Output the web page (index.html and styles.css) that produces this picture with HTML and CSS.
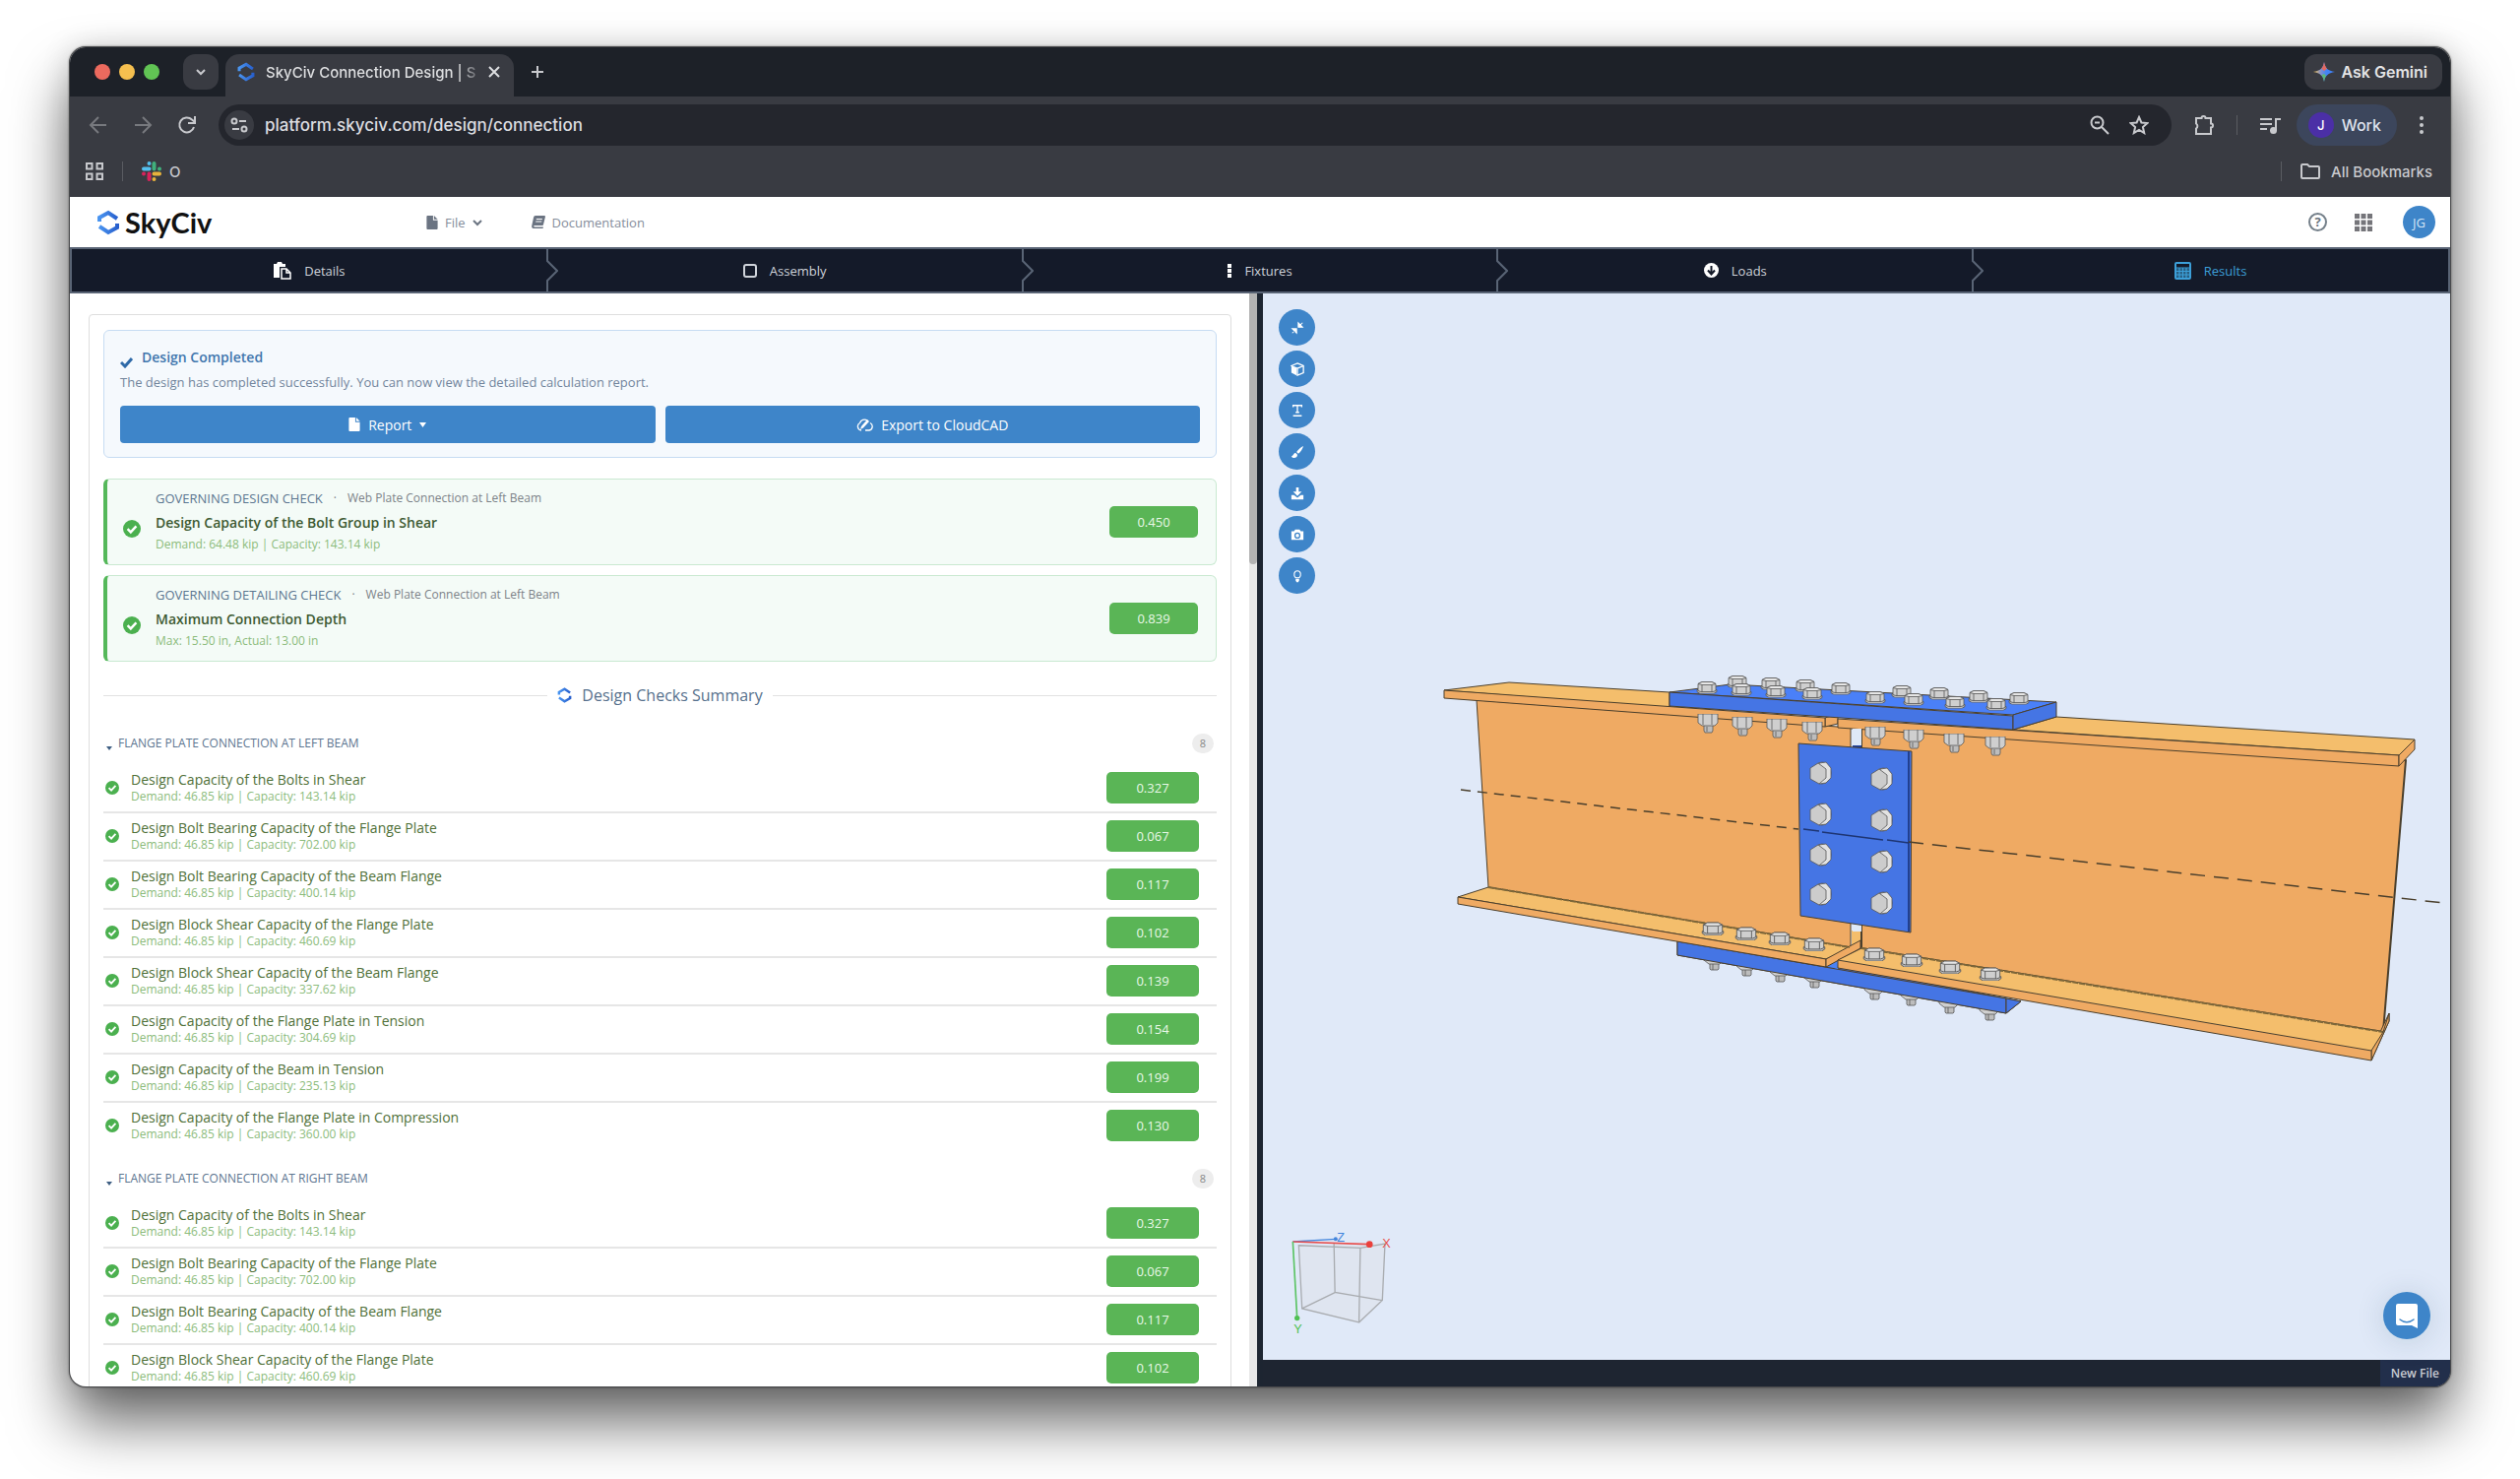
FILE: index.html
```html
<!DOCTYPE html>
<html lang="en">

<head>
  <meta charset="UTF-8">
  <title>SkyCiv Connection Design | SkyCiv</title>
  <link rel="stylesheet" href="styles.css">
</head>

<body>
  <!-- Shared icons -->
  <svg class="defs" width="0" height="0" aria-hidden="true">
    <defs>
      <linearGradient id="blueFade" gradientUnits="userSpaceOnUse" x1="0" y1="0" x2="24" y2="0">
        <stop offset="0" stop-color="#4f9cf5" />
        <stop offset="1" stop-color="#2358c8" />
      </linearGradient>
      <linearGradient id="gemini" x1="0" y1="0" x2="1" y2="0">
        <stop offset="0" stop-color="#f6c244" />
        <stop offset="0.35" stop-color="#7f8fd0" />
        <stop offset="0.6" stop-color="#4285f4" />
        <stop offset="1" stop-color="#3f7df0" />
      </linearGradient>
    </defs>
    <symbol id="skyciv" viewBox="0 0 24 26">
      <g fill="none" stroke="url(#blueFade)" stroke-width="4">
        <path d="M3 12V8l9-5 9 6" />
        <path d="M21 14v4l-9 5-9-6" />
      </g>
    </symbol>
    <symbol id="ok" viewBox="0 0 18 18">
      <circle cx="9" cy="9" r="9" fill="#4bb04f" />
      <path d="M4.6 9.2l3.2 3.2 5.6-6" fill="none" stroke="#fff" stroke-width="2.4" />
    </symbol>
    <symbol id="file" viewBox="0 0 12 15">
      <path d="M1 0h6v5h5v9a1 1 0 0 1-1 1H1a1 1 0 0 1-1-1V1a1 1 0 0 1 1-1z" fill="currentColor" />
      <path d="M8 0l4 4H8z" fill="currentColor" />
    </symbol>
    <symbol id="head" viewBox="0 0 22 13">
      <path d="M1 9h20v2l-3 2H4l-3-2z" fill="#b9b9b9" />
      <path d="M2 3l4-2h10l4 2v7l-3 1H5l-3-1z" fill="#cfcfcf" />
      <path d="M2 3l4-2h10l4 2-4 1H6z" fill="#e6e6e6" />
      <path d="M6 4v7M16 4v7" />
    </symbol>
    <symbol id="nut" viewBox="0 0 22 20">
      <path d="M7 11h9v6l-1 2H8l-1-2z" fill="#bdbdbd" />
      <path d="M1 0h20v9l-3 3H5L1 9z" fill="#cfcfcf" />
      <path d="M6 0v11M15 0v11M10 13v5" />
    </symbol>
    <symbol id="tip" viewBox="0 0 22 14">
      <path d="M7 4h9v8l-1 1H8l-1-1z" fill="#bdbdbd" />
      <path d="M1 0h20v3l-4 4H6L1 3z" fill="#cfcfcf" />
      <path d="M10 7v6" />
    </symbol>
    <symbol id="hex" viewBox="0 0 24 24">
      <ellipse cx="14" cy="12" rx="9" ry="11" fill="#b5b5b5" />
      <path d="M11 2l7-1 5 6v10l-5 5-7 1z" fill="#e2e2e2" />
      <path d="M2 7l8-5 8 6v9l-7 6-9-5z" fill="#cccccc" />
    </symbol>
  </svg>

  <div class="window">
    <!-- Browser tab strip -->
    <div class="tabstrip">
      <div class="lights"><i class="red"></i><i class="yellow"></i><i class="green"></i></div>
      <button class="tab-search" aria-label="Search tabs">
        <svg width="12" height="12" viewBox="0 0 12 12"><path d="M2 4l4 4 4-4" /></svg>
      </button>
      <div class="tab">
        <svg width="20" height="20"><use href="#skyciv" /></svg>
        <span class="tab-title">SkyCiv Connection Design | S</span>
        <button class="plain" aria-label="Close tab">
          <svg width="12" height="12" viewBox="0 0 12 12"><path d="M1 1l10 10M11 1L1 11" /></svg>
        </button>
      </div>
      <button class="plain new-tab" aria-label="New tab">
        <svg width="14" height="14" viewBox="0 0 14 14"><path d="M7 1v12M1 7h12" /></svg>
      </button>
      <button class="gemini">
        <svg width="24" height="20" viewBox="0 0 24 20"><path d="M12 0c1 6 4 9 11 10-7 1-10 4-11 10C11 14 8 11 1 10 8 9 11 6 12 0z" fill="url(#gemini)" stroke="none" /><path d="M12 0c.5 3 1.500 5 3 6.800L12 9 9.300 6.600C11 5 11.500 3 12 0z" fill="#e4685f" stroke="none" /><path d="M12 20c-.5-3-1.200-5-2.700-6.700L12 12l2 2c-1 1.500-1.600 3-2 6z" fill="#5cb874" stroke="none" /></svg>
        Ask Gemini
      </button>
    </div>

    <!-- Address bar -->
    <div class="toolbar">
      <div class="history">
        <button class="plain dim" aria-label="Back"><svg width="20" height="20" viewBox="0 0 20 20"><path d="M18 10H3M10 2l-8 8 8 8" /></svg></button>
        <button class="plain dim" aria-label="Forward"><svg width="20" height="20" viewBox="0 0 20 20"><path d="M2 10h15M10 2l8 8-8 8" /></svg></button>
        <button class="plain" aria-label="Reload"><svg width="20" height="20" viewBox="0 0 20 20"><path d="M17 12a7.500 7.500 0 1 1-2-7.500L18 7M18 1v7h-7" /></svg></button>
      </div>
      <div class="address">
        <button class="site-info" aria-label="Site information"><svg width="18" height="18" viewBox="0 0 18 18"><circle cx="4" cy="5" r="2.500" /><path d="M9 5h7M2 13h7" /><circle cx="14" cy="13" r="2.500" /></svg></button>
        <input class="url" type="text" aria-label="Address" value="platform.skyciv.com/design/connection">
        <button class="plain" aria-label="Zoom"><svg width="20" height="20" viewBox="0 0 20 20"><circle cx="7.500" cy="7.500" r="6" /><path d="M12 12l7 7M5 7.500h5" /></svg></button>
        <button class="plain" aria-label="Bookmark"><svg width="20" height="20" viewBox="0 0 20 20"><path d="M10 2l2.400 5.500 6 .5-4.500 4 1.300 6-5.200-3.200L4.800 18l1.300-6L1.600 8l6-.5z" /></svg></button>
      </div>
      <button class="plain" aria-label="Extensions"><svg width="22" height="22" viewBox="0 0 22 22"><path d="M3 4h5.500a2 2 0 0 1 4 0H18v5.500a2 2 0 0 1 0 4V20H3v-5.500a3 3 0 0 0 0-5z" /></svg></button>
      <span class="sep"></span>
      <button class="plain" aria-label="Media"><svg width="22" height="20" viewBox="0 0 22 20"><path d="M1 4h12M1 9h12M1 14h7M17 16V4h5" /><circle cx="14.500" cy="15.500" r="2.500" fill="currentColor" /></svg></button>
      <button class="profile"><span class="face">J</span>Work</button>
      <button class="plain" aria-label="Menu"><svg width="6" height="20" viewBox="0 0 6 20" fill="currentColor" stroke="none"><circle cx="3" cy="3" r="2" /><circle cx="3" cy="10" r="2" /><circle cx="3" cy="17" r="2" /></svg></button>
    </div>

    <!-- Bookmarks -->
    <div class="bookmarks">
      <button class="plain" aria-label="Tab groups"><svg width="20" height="20" viewBox="0 0 20 20"><rect x="2" y="2" width="5.500" height="5.500" /><rect x="12.500" y="2" width="5.500" height="5.500" /><rect x="2" y="12.500" width="5.500" height="5.500" /><rect x="12.500" y="12.500" width="5.500" height="5.500" /></svg></button>
      <span class="sep"></span>
      <a href="#" class="bookmark">
        <svg width="22" height="22" viewBox="0 0 22 22" stroke-linecap="round" stroke-width="4">
          <path d="M8.500 3v0M3 8.500h5.500" stroke="#54c0ee" />
          <path d="M13.500 3v5.500M19 8.500v0" stroke="#40b07c" />
          <path d="M13.500 13.500H19M13.500 19v0" stroke="#e7b23c" />
          <path d="M8.500 13.500V19M3 13.500v0" stroke="#d8235b" />
        </svg>
        O
      </a>
      <span class="sep push"></span>
      <a href="#" class="bookmark all">
        <svg width="22" height="18" viewBox="0 0 22 18"><path d="M2 3a1 1 0 0 1 1-1h5l2 2h9a1 1 0 0 1 1 1v10a1 1 0 0 1-1 1H3a1 1 0 0 1-1-1z" /></svg>
        All Bookmarks
      </a>
    </div>

    <!-- App header -->
    <header class="app-header">
      <a href="#" class="logo"><svg width="24" height="26"><use href="#skyciv" /></svg>SkyCiv</a>
      <nav class="app-menu">
        <a href="#"><svg width="12" height="14"><use href="#file" /></svg>File<svg width="10" height="8" viewBox="0 0 10 8"><path d="M1 2l4 4 4-4" fill="none" stroke="currentColor" stroke-width="2" /></svg></a>
        <a href="#"><svg width="14" height="13" viewBox="0 0 14 13"><path d="M4 0h9a1 1 0 0 1 1 1l-2 8a1 1 0 0 1-1 1H3c-1 0-1 1.500 0 1.500h9l-.5 1.500H2c-1.500 0-2-1-1.800-2.500L2 2c.3-1.200.8-2 2-2zm1 3-.3 1h6l.3-1zm-.6 2.500-.3 1h6l.3-1z" fill="currentColor" /></svg>Documentation</a>
      </nav>
      <button class="help" aria-label="Help">?</button>
      <button class="apps" aria-label="Apps"><svg width="18" height="18" viewBox="0 0 18 18" fill="#75757a"><path d="M0 0h5v5H0zM6.500 0h5v5h-5zM13 0h5v5h-5zM0 6.500h5v5H0zM6.500 6.500h5v5h-5zM13 6.500h5v5h-5zM0 13h5v5H0zM6.500 13h5v5h-5zM13 13h5v5h-5z" /></svg></button>
      <button class="avatar">JG</button>
    </header>

    <!-- Design steps -->
    <ol class="steps">
      <li><a href="#"><svg width="18" height="18" viewBox="0 0 18 18"><path d="M0 2h3l1-2h4l1 2h3v3H6v11H0z" fill="#fff" /><path d="M8 7h5l4 4v6H8zM13 7v4h4" fill="none" stroke="#fff" stroke-width="1.500" /></svg>Details</a><svg class="notch" width="12" height="44" viewBox="0 0 12 44"><path d="M1 0v12l10 10L1 32v12" /></svg></li>
      <li><a href="#"><svg width="14" height="14" viewBox="0 0 14 14"><rect x="1" y="1" width="12" height="12" rx="2" fill="none" stroke="#cfd3da" stroke-width="2" /></svg>Assembly</a><svg class="notch" width="12" height="44" viewBox="0 0 12 44"><path d="M1 0v12l10 10L1 32v12" /></svg></li>
      <li><a href="#"><svg width="4" height="14" viewBox="0 0 4 14" fill="#fff"><path d="M0 0h4v4H0zM0 5h4v4H0zM0 10h4v4H0z" /></svg>Fixtures</a><svg class="notch" width="12" height="44" viewBox="0 0 12 44"><path d="M1 0v12l10 10L1 32v12" /></svg></li>
      <li><a href="#"><svg width="15" height="15" viewBox="0 0 15 15"><circle cx="7.500" cy="7.500" r="7.500" fill="#fff" /><path d="M7.500 3v8M4 7.500l3.500 4 3.500-4" fill="none" stroke="#141a29" stroke-width="2" /></svg>Loads</a><svg class="notch" width="12" height="44" viewBox="0 0 12 44"><path d="M1 0v12l10 10L1 32v12" /></svg></li>
      <li class="active"><a href="#"><svg width="17" height="18" viewBox="0 0 17 18"><rect x="1" y="1" width="15" height="16" rx="1" fill="none" stroke="currentColor" stroke-width="2" /><path d="M1 6h15M1 9.500h15M1 13h15M5 6v11M8.500 6v11M12 6v11" stroke="currentColor" stroke-width="1.200" /><path d="M2 6.500h13v10H2z" fill="currentColor" opacity=".5" /></svg>Results</a></li>
    </ol>

    <main class="main">
      <!-- Results -->
      <section class="results">
        <div class="panel">
          <div class="alert">
            <h1><svg width="13" height="12" viewBox="0 0 13 12"><path d="M1 6l4 4 7-8" fill="none" stroke="#2f6aa8" stroke-width="3" /></svg>Design Completed</h1>
            <p>The design has completed successfully. You can now view the detailed calculation report.</p>
            <div class="actions">
              <button class="btn"><svg width="12" height="14"><use href="#file" /></svg>Report<svg width="7" height="5" viewBox="0 0 7 5"><path d="M0 0h7L3.500 5z" fill="#fff" /></svg></button>
              <button class="btn"><svg width="17" height="13" viewBox="0 0 17 13"><path d="M5 12a4 4 0 0 1-1.500-7.500A5 5 0 0 1 11 2M14 4.500A4 4 0 0 1 13 12H9" fill="none" stroke="#fff" stroke-width="1.300" /><path d="M4 11l1-3 6-7 2 2-6 6.500z" fill="#fff" /></svg>Export to CloudCAD</button>
            </div>
          </div>

          <div class="governing">
            <svg class="ok-icon" width="18" height="18"><use href="#ok" /></svg>
            <div class="texts">
              <div class="kind">GOVERNING DESIGN CHECK <span>·</span> <span>Web Plate Connection at Left Beam</span></div>
              <h3>Design Capacity of the Bolt Group in Shear</h3>
              <p>Demand: 64.48 kip | Capacity: 143.14 kip</p>
            </div>
            <span class="ratio">0.450</span>
          </div>
          <div class="governing">
            <svg class="ok-icon" width="18" height="18"><use href="#ok" /></svg>
            <div class="texts">
              <div class="kind">GOVERNING DETAILING CHECK <span>·</span> <span>Web Plate Connection at Left Beam</span></div>
              <h3>Maximum Connection Depth</h3>
              <p>Max: 15.50 in, Actual: 13.00 in</p>
            </div>
            <span class="ratio">0.839</span>
          </div>

          <h2 class="summary"><svg width="15" height="18"><use href="#skyciv" /></svg>Design Checks Summary</h2>

          <div class="group">
            <h3 class="group-head"><i class="caret"></i>FLANGE PLATE CONNECTION AT LEFT BEAM<span class="count">8</span></h3>
            <ul class="checks" data-rows="8"></ul>
          </div>
          <div class="group">
            <h3 class="group-head"><i class="caret"></i>FLANGE PLATE CONNECTION AT RIGHT BEAM<span class="count">8</span></h3>
            <ul class="checks" data-rows="4"></ul>
          </div>
        </div>
        <div class="scrollbar"><i></i></div>
      </section>

      <div class="splitter"></div>

      <!-- 3D view -->
      <section class="viewer">
        <div class="canvas">
          <svg class="model" viewBox="0 0 1206 1083">
            <g transform="translate(-1283 -298)" stroke="#4a3f2c" stroke-linejoin="round">
              <!-- bottom plate -->
              <path d="M1704 956L1855 978 2053 1017 2038 1029 1704 970z" fill="#4575e4" />
              <g id="tips" class="bolts"></g>
              <path d="M1704 956v14L2038 1029v-15z" fill="#4575e4" />
              <path d="M2038 1014l15 3-15 12z" fill="#4575e4" />
              <path d="M1857 981l10-6v9z" fill="#4a82f5" stroke="none" />
              <!-- far side of the gap -->
              <path d="M1881 945h10v10l-10 7z" fill="#f4be6c" stroke="none" />
              <!-- left beam -->
              <path d="M1500 711L1880 739V963L1512 901z" fill="#efaa63" />
              <path d="M1481 911l31-10 369 61-26 12z" fill="#f4be6c" />
              <path d="M1481 911l374 63v8L1481 918z" fill="#efaa63" />
              <path d="M1855 974l35-19v8l-35 19z" fill="#efaa63" />
              <path d="M1854 729l13-4v10l-13 3z" fill="#efaa63" />
              <path d="M1467 701l66-8 163 10v16z" fill="#f4be6c" />
              <path d="M1467 701l387 28v9L1467 709z" fill="#efaa63" />
              <!-- right beam -->
              <path d="M1891 738l553 34-23 276-530-85z" fill="#efaa63" stroke-width="2" />
              <path d="M2427 1029v8l-18 40v-10z" fill="#efaa63" />
              <path d="M1867 975l24-12 530 85 6-19v8l-18 30z" fill="#f4be6c" stroke="none" />
              <path d="M1891 963l530 85M1512 901l367 61" fill="none" stroke-dasharray="6 1" stroke="#7d6739" stroke-width="2" />
              <path d="M1867 975l24-12M2421 1048l6-19v8l-18 40v-10z" fill="#efaa63" />
              <path d="M1867 975l542 92v10L1867 983z" fill="#efaa63" />
              <path d="M2045 741l44-13 364 23-16 16z" fill="#f4be6c" />
              <path d="M1867 730l570 37v11L1867 739z" fill="#efaa63" />
              <path d="M2437 767l16-16v10l-16 17z" fill="#efaa63" />
              <path d="M1882 740h9v17h-9zM1882 938h9v8h-9z" fill="#dfe9f8" stroke="none" />
              <path d="M1882 757h9v4h-9z" fill="#1f3f9a" stroke="none" />
              <g id="nuts" class="bolts"></g>
              <!-- top plate -->
              <path d="M1696 703l62-8 331 18-44 13z" fill="#4a80f8" />
              <path d="M1696 703l349 24v14l-349-24z" fill="#4575e4" />
              <path d="M2045 726l44-13v15l-44 13z" fill="#4575e4" />
              <!-- web plate -->
              <path d="M1827 755l115 8-1 184-112-17z" fill="#4575e4" />
              <path d="M1939 763v183" stroke="#22408f" stroke-width="2" />
              <path d="M1484 802l343 40" stroke-dasharray="10 7" stroke-width="1.500" />
              <path d="M1832 842l16 2M1851 845l62 8M1917 853l22 3" stroke="#1e3572" stroke-width="1.500" />
              <path d="M1939 855l543 62" stroke-dasharray="15 9" stroke-width="1.500" />
              <g id="heads" class="bolts"></g>
            </g>
          </svg>

          <div class="tools">
            <button aria-label="Fit"><svg viewBox="0 0 16 16"><path d="M9 2v5h5zM7 14V9H2zM9 7l5-5M7 9l-5 5" fill="#fff" stroke="#fff" stroke-width="1.200" /></svg></button>
            <button aria-label="View"><svg viewBox="0 0 16 16"><path d="M1 4l6 3v8l-6-3z" fill="#fff" /><path d="M8 1l7 3v8l-7 3V7L1 4zM8 7l7-3" fill="none" stroke="#fff" stroke-width="1.500" /></svg></button>
            <button aria-label="Labels"><svg viewBox="0 0 16 16"><path d="M3 4V2h10v2M8 2v8M6 10h4M3 14h10" fill="none" stroke="#fff" stroke-width="1.500" /></svg></button>
            <button aria-label="Paint"><svg viewBox="0 0 16 16"><path d="M15 1c-3 1-6 4-8 7l2 2c3-2 5-6 6-9zM6 9c-3 0-2 3-5 4 2 3 7 2 7-2z" fill="#fff" /></svg></button>
            <button aria-label="Download"><svg viewBox="0 0 16 16"><path d="M6.500 1h3v5H13l-5 5-5-5h3.500zM1 10h3l4 3 4-3h3v5H1z" fill="#fff" /></svg></button>
            <button aria-label="Screenshot"><svg viewBox="0 0 16 16"><path d="M1 4h3l1.500-2h5L12 4h3v10H1z" fill="#fff" /><circle cx="8" cy="9" r="2.800" fill="none" stroke="#3e85c9" stroke-width="1.500" /></svg></button>
            <button aria-label="Lighting"><svg viewBox="0 0 16 16"><path d="M6 10C3 7 4 2 8 2s5 5 2 8z" fill="none" stroke="#fff" stroke-width="1.300" /><path d="M6 11h4v2l-1 2H7l-1-2z" fill="#fff" /></svg></button>
          </div>

          <svg class="gizmo" width="107" height="107" viewBox="90 90 320 320">
            <path d="M118 134l187 8-4 226-173-42zM225 126l155 3-8 172-144-24zM305 142l75-13-8 172-71 67z" fill="#dddddd" fill-opacity=".3" />
            <g fill="none" stroke="#a9acb0" stroke-width="4">
              <path d="M118 134l187 8-4 226-173-42zM305 142l75-13-8 172-71 67M225 126l3 151 144 24M228 277l-100 49" />
            </g>
            <path d="M100 123l130-8" stroke="#4385dc" stroke-width="4" />
            <path d="M100 123l232 8" stroke="#e8504f" stroke-width="5" />
            <path d="M100 123l13 232" stroke="#5cc466" stroke-width="5" />
            <circle cx="230" cy="115" r="6" fill="#4385dc" />
            <circle cx="333" cy="131" r="10" fill="#ea403c" />
            <circle cx="113" cy="355" r="8" fill="#4fc052" />
            <text x="234" y="123" fill="#4385dc">Z</text>
            <text x="372" y="142" fill="#e8504f">X</text>
            <text x="103" y="400" fill="#4fc052">Y</text>
          </svg>

          <button class="chat" aria-label="Open chat">
            <svg width="22" height="25" viewBox="0 0 22 25"><path d="M2 0h18a2 2 0 0 1 2 2v23l-6-3H2a2 2 0 0 1-2-2V2a2 2 0 0 1 2-2z" fill="#fff" /><path d="M4 16c4 3.500 10 3.500 14 0" fill="none" stroke="#3e85c9" stroke-width="1.500" stroke-linecap="round" /></svg>
          </button>
        </div>
        <footer class="statusbar"><button>New File</button></footer>
      </section>
    </main>
  </div>

  <script>
    // name, capacity (kip), ratio
    const checks = [
      ["Design Capacity of the Bolts in Shear", "143.14", "0.327"],
      ["Design Bolt Bearing Capacity of the Flange Plate", "702.00", "0.067"],
      ["Design Bolt Bearing Capacity of the Beam Flange", "400.14", "0.117"],
      ["Design Block Shear Capacity of the Flange Plate", "460.69", "0.102"],
      ["Design Block Shear Capacity of the Beam Flange", "337.62", "0.139"],
      ["Design Capacity of the Flange Plate in Tension", "304.69", "0.154"],
      ["Design Capacity of the Beam in Tension", "235.13", "0.199"],
      ["Design Capacity of the Flange Plate in Compression", "360.00", "0.130"]
    ];

    document.querySelectorAll(".checks").forEach(list => {
      list.innerHTML = checks.slice(0, list.dataset.rows).map(([name, capacity, ratio]) => `
        <li>
          <svg width="14" height="14"><use href="#ok" /></svg>
          <div class="texts">
            <h4>${name}</h4>
            <p>Demand: 46.85 kip | Capacity: ${capacity} kip</p>
          </div>
          <span class="ratio wide">${ratio}</span>
        </li>`).join("");
    });

    // Put one symbol at every centre point
    function place(id, symbol, w, h, points) {
      document.getElementById(id).innerHTML += points.map(([x, y]) =>
        `<use href="#${symbol}" x="${x - w / 2}" y="${y - h / 2}" width="${w}" height="${h}" />`).join("");
    }

    // top flange: back row, then front row
    place("heads", "head", 22, 13, [
      [1765, 692], [1799, 694], [1834, 696], [1870, 699], [1932, 702], [1970, 704], [2010, 707], [2051, 709],
      [1734, 698], [1769, 700], [1804, 702], [1841, 704], [1905, 708], [1944, 710], [1986, 713], [2028, 715]
    ]);
    // bottom flange
    place("heads", "head", 24, 14, [
      [1740, 943], [1774, 948], [1808, 953], [1843, 959], [1904, 969], [1942, 975], [1981, 982], [2022, 989]
    ]);
    // web plate
    place("heads", "hex", 24, 24, [
      [1849, 785], [1849, 827], [1849, 868], [1849, 908],
      [1911, 791], [1911, 833], [1911, 875], [1911, 917]
    ]);
    place("nuts", "nut", 22, 20, [
      [1735, 735], [1770, 738], [1805, 740], [1841, 743], [1905, 748], [1944, 751], [1985, 755], [2027, 758]
    ]);
    place("tips", "tip", 22, 14, [
      [1741, 979], [1774, 985], [1808, 991], [1843, 997], [1904, 1009], [1941, 1015], [1980, 1023], [2021, 1030]
    ]);
  </script>
</body>

</html>
```
FILE: styles.css
```css
* {
  box-sizing: border-box;
}

html,
body {
  margin: 0;
  height: 100%;
  background: #fff;
}

body {
  padding: 48px 71px 94px;
  font-family: "Open Sans", sans-serif;
  font-size: 13px;
  overflow: hidden;
}

h1, h2, h3, h4, p, ul, ol {
  margin: 0;
  padding: 0;
  list-style: none;
}

a {
  color: inherit;
  text-decoration: none;
}

button {
  font: inherit;
  color: inherit;
  border: none;
  padding: 0;
  background: none;
  cursor: pointer;
}

svg {
  flex: none;
  display: block;
}

.defs {
  position: absolute;
}

.window {
  height: 100%;
  display: flex;
  flex-direction: column;
  border-radius: 16px;
  overflow: hidden;
  background: #fff;
  box-shadow: 0 0 0 1px #48494b, 0 0 3px #000, 0 36px 60px rgba(0, 0, 0, 0.6), 0 0 30px rgba(0, 0, 0, 0.15);
}

/* Browser chrome */
.tabstrip,
.toolbar,
.bookmarks {
  display: flex;
  align-items: center;
  font-family: Inter, sans-serif;
  font-size: 16px;
  color: #c8c9cd;
}

.tabstrip svg,
.toolbar svg,
.bookmarks svg {
  fill: none;
  stroke: currentColor;
  stroke-width: 2;
}

.toolbar svg[fill] {
  fill: currentColor;
  stroke: none;
}

.tabstrip {
  height: 50px;
  padding: 7px 8px 0 25px;
  align-items: flex-start;
  background: #1d2128;
}

.lights {
  display: flex;
  gap: 9px;
  padding-top: 10px;
}

.lights i {
  width: 16px;
  height: 16px;
  border-radius: 50%;
}

.red { background: #ec6a5e; }
.yellow { background: #f5bf4f; }
.green { background: #61c454; }

.tab-search {
  width: 36px;
  height: 36px;
  margin: 0 7px 0 24px;
  display: grid;
  place-items: center;
  border-radius: 12px;
  background: #393b42;
}

.tab {
  width: 293px;
  height: 43px;
  padding: 0 14px 7px 11px;
  display: flex;
  align-items: center;
  gap: 10px;
  border-radius: 14px 14px 0 0;
  background: #393b42;
  color: #dddee0;
  font-size: 15px;
  font-weight: 500;
}

.tab-title {
  flex: 1;
  white-space: nowrap;
  mask-image: linear-gradient(to right, #000 195px, transparent 222px);
}

.plain {
  display: grid;
  place-items: center;
}

.new-tab {
  height: 36px;
  margin-left: 17px;
}

.gemini {
  height: 36px;
  margin-left: auto;
  padding: 0 15px 0 8px;
  display: flex;
  align-items: center;
  gap: 6px;
  border-radius: 12px;
  background: #393b42;
  color: #e3e3e5;
  font-weight: 600;
}

.toolbar {
  padding: 8px 26px 4px 19px;
  gap: 22px;
  background: #393b42;
}

.history {
  display: flex;
  gap: 25px;
}

.dim {
  color: #77797e;
}

.address {
  flex: 1;
  height: 42px;
  padding: 0 23px 0 6px;
  display: flex;
  align-items: center;
  gap: 20px;
  border-radius: 21px;
  background: #24262d;
}

.site-info {
  width: 30px;
  height: 30px;
  margin-right: -9px;
  display: grid;
  place-items: center;
  border-radius: 50%;
  background: #393b42;
}

.url {
  flex: 1;
  padding: 0;
  border: none;
  outline: none;
  background: none;
  color: #dcdde0;
  font: 500 17px Inter, sans-serif;
}

.sep {
  width: 1px;
  height: 20px;
  background: #5a5c62;
}

.profile {
  height: 42px;
  margin: 0 0 0 -6px;
  padding: 0 16px 0 12px;
  display: flex;
  align-items: center;
  gap: 8px;
  border-radius: 21px;
  background: #3c465c;
  color: #dfe3ee;
  font-weight: 500;
}

.face {
  width: 26px;
  height: 26px;
  border-radius: 50%;
  background: #4b2fa6;
  color: #fff;
  font-size: 13px;
  line-height: 26px;
}

.bookmarks {
  height: 48px;
  padding: 0 18px 4px 15px;
  gap: 18px;
  background: #393b42;
  font-size: 15px;
  font-weight: 500;
}

.bookmark {
  display: flex;
  align-items: center;
  gap: 7px;
}

.bookmark svg[stroke-width] {
  stroke-width: 4;
}

.push {
  margin-left: auto;
}

.all {
  gap: 10px;
}

/* App header */
.app-header {
  height: 51px;
  padding: 0 15px 0 27px;
  display: flex;
  align-items: center;
  color: #858d9b;
}

.logo {
  width: 335px;
  display: flex;
  align-items: center;
  gap: 5px;
  color: #111;
  font: bold 29px Lato, sans-serif;
}

.app-menu {
  flex: 1;
  display: flex;
  gap: 50px;
}

.app-menu a {
  display: flex;
  align-items: center;
  gap: 7px;
}

.app-menu svg {
  color: #6b7482;
}

.help {
  width: 19px;
  height: 19px;
  border: 2px solid #75808a;
  border-radius: 50%;
  color: #6a7580;
  font-weight: 700;
  line-height: 15px;
}

.apps {
  margin: 0 31px 0 28px;
}

.avatar {
  width: 33px;
  height: 33px;
  border-radius: 50%;
  background: #3e85c9;
  color: #d6e6f5;
}

/* Steps bar */
.steps {
  height: 47px;
  display: flex;
  border: 2px solid #596475;
  background: #141a29;
  color: #cfd3da;
}

.steps li {
  flex: 1;
  position: relative;
}

.steps a {
  height: 100%;
  display: flex;
  align-items: center;
  justify-content: center;
  gap: 13px;
}

.steps .active {
  color: #3c9fd8;
}

.notch {
  position: absolute;
  top: 0;
  right: -11px;
  z-index: 1;
  fill: none;
  stroke: #596475;
  stroke-width: 2;
}

/* Results panel */
.main {
  flex: 1;
  min-height: 0;
  display: flex;
}

.results {
  flex: 1;
  display: flex;
  overflow: hidden;
}

.panel {
  flex: 1;
  height: max-content;
  margin: 21px 18px 0 19px;
  padding: 15px 14px;
  border: 1px solid #dedede;
  border-radius: 4px;
}

.scrollbar {
  width: 8px;
  background: #e8e8e8;
}

.scrollbar i {
  display: block;
  height: 275px;
  border-radius: 0 0 4px 4px;
  background: #b3b3b3;
}

.splitter {
  width: 6px;
  background: #1d2531;
}

.alert {
  padding: 16px 16px 14px;
  margin-bottom: 21px;
  border: 1px solid #c7dcf3;
  border-radius: 6px;
  background: #f5f9fd;
}

.alert h1 {
  display: flex;
  align-items: flex-end;
  gap: 9px;
  color: #3f76ad;
  font-size: 14px;
  font-weight: 600;
  line-height: 22px;
}

.alert p {
  margin-top: 4px;
  color: #72859c;
  font-size: 13px;
  line-height: 20px;
}

.actions {
  margin-top: 14px;
  display: flex;
  gap: 10px;
}

.btn {
  flex: 1;
  height: 38px;
  display: flex;
  align-items: center;
  justify-content: center;
  gap: 8px;
  border-radius: 4px;
  background: #3e85c9;
  color: #fff;
  font-size: 14px;
  font-weight: 500;
}

.governing {
  margin-bottom: 10px;
  padding: 9px 18px 10px 16px;
  display: flex;
  align-items: center;
  gap: 15px;
  border: 1px solid #c9e9d1;
  border-left: 4px solid #55b85a;
  border-radius: 6px;
  background: #f4fbf7;
}

.ok-icon {
  margin-top: 14px;
}

.texts {
  flex: 1;
}

.kind {
  height: 20px;
  display: flex;
  gap: 11px;
  color: #5b7690;
  font-size: 13px;
  font-weight: 500;
  line-height: 20px;
}

.kind span {
  color: #7c8288;
  font-size: 12px;
}

.governing h3 {
  margin-top: 3px;
  color: #3d5a32;
  font-size: 14px;
  font-weight: 600;
  line-height: 24px;
}

.texts p {
  color: #8cbc7c;
  font-size: 12px;
  line-height: 16px;
}

.governing p {
  line-height: 20px;
}

.ratio {
  width: 90px;
  height: 32px;
  border-radius: 5px;
  background: #5ab556;
  color: #e9f8e8;
  line-height: 32px;
  text-align: center;
}

.ratio.wide {
  width: 94px;
}

.summary {
  margin: 22px 0 27px;
  display: flex;
  align-items: center;
  gap: 10px;
  color: #56708c;
  font-size: 16px;
  font-weight: 500;
  line-height: 24px;
}

.summary::before,
.summary::after {
  content: "";
  flex: 1;
  height: 1px;
  background: #e2e2e2;
}

.group {
  margin-top: 18px;
}

.group-head {
  margin-bottom: 12px;
  padding: 0 3px;
  display: flex;
  align-items: center;
  gap: 6px;
  color: #5d7590;
  font-size: 12px;
  font-weight: 500;
  line-height: 20px;
}

.caret {
  margin-top: 9px;
  border: 3px solid transparent;
  border-top: 4px solid #3f5f83;
  border-bottom: none;
}

.count {
  width: 22px;
  margin-left: auto;
  border-radius: 10px;
  background: #ededed;
  color: #888;
  font-size: 11px;
  text-align: center;
}

.checks li {
  height: 49px;
  padding: 0 18px 2px 2px;
  display: flex;
  align-items: center;
  gap: 12px;
  border-bottom: 2px solid #e6e6e6;
}

.checks li:last-child {
  border-bottom-color: transparent;
}

.checks h4 {
  color: #4f7038;
  font-size: 14px;
  font-weight: 500;
  line-height: 18px;
}

/* 3D view */
.viewer {
  flex: 1;
  display: flex;
  flex-direction: column;
}

.canvas {
  flex: 1;
  min-height: 0;
  position: relative;
  background: #e0e9f8;
}

.model {
  width: 100%;
  height: 100%;
}

.bolts {
  stroke: #555;
  stroke-width: 0.8;
}

.tools {
  position: absolute;
  top: 16px;
  left: 16px;
  display: flex;
  flex-direction: column;
  gap: 5px;
}

.tools button {
  width: 37px;
  height: 37px;
  display: grid;
  place-items: center;
  border-radius: 50%;
  background: #3e85c9;
}

.tools svg {
  width: 14px;
  height: 14px;
}

.gizmo {
  position: absolute;
  left: 27px;
  bottom: 24px;
  font: 38px "Liberation Sans", sans-serif;
}

.chat {
  position: absolute;
  right: 20px;
  bottom: 21px;
  width: 48px;
  height: 48px;
  display: grid;
  place-items: center;
  border-radius: 50%;
  background: #3e85c9;
  box-shadow: 0 2px 30px rgba(0, 60, 80, 0.15);
}

.statusbar {
  height: 27px;
  display: flex;
  justify-content: flex-end;
  background: #1e2531;
}

.statusbar button {
  padding: 0 11px;
  background: #222f4b;
  color: #c9ccd3;
  font-weight: 600;
  font-size: 12px;
}
```
